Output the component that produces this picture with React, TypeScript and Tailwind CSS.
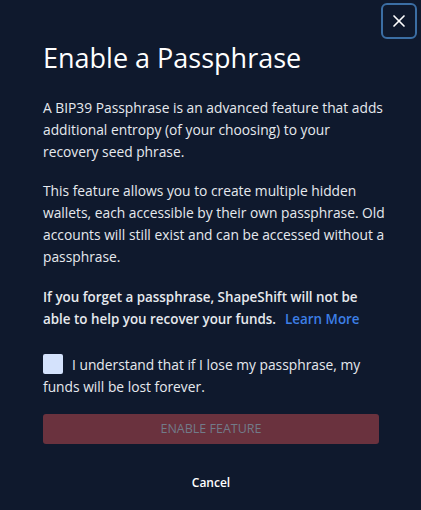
import { X } from "lucide-react";

export default function App() {
  return (
    <div
      className="relative min-h-[510px] w-full bg-[#0f192d] text-[#e6e9ee]"
      style={{ fontFamily: '"Open Sans", sans-serif' }}
    >
      <button className="absolute right-[4px] top-[3px] flex h-[36px] w-[36px] items-center justify-center rounded-md border-2 border-[#3b6ea4] text-white">
        <X className="h-[20px] w-[20px]" strokeWidth={2} />
      </button>
      <div className="pl-[43px] pr-[32px] pt-[38px]">
        <h1 className="text-[27px] leading-[40px] text-white">Enable a Passphrase</h1>
        <div className="mt-[19px] text-[13.8px] leading-[22px]">
          <p>
            A BIP39 Passphrase is an advanced feature that adds additional entropy (of your
            choosing) to your
            <br />
            recovery seed phrase.
          </p>
          <p className="mt-[17px]">
            This feature allows you to create multiple hidden wallets, each accessible by their own
            passphrase. Old accounts will still exist and can be accessed without a passphrase.
          </p>
          <p className="mt-[18px] pr-[10px] text-[13.4px] font-semibold">
            If you forget a passphrase, ShapeShift will not be able to help you recover your funds.
            <a className="ml-[9px] text-[#3d7fe6]">Learn More</a>
          </p>
          <label className="mt-[20px] block pr-[10px]">
            <span className="mr-[9px] inline-block h-[20px] w-[20px] translate-y-[4px] rounded-[2px] bg-[#d4e2fc] align-baseline" />
            I understand that if I lose my passphrase, my funds will be lost forever.
          </label>
        </div>
        <button className="mt-[16px] flex h-[30px] w-[336px] items-center justify-center rounded-[3px] bg-[#6a323e] text-[12.5px] uppercase text-[#727b89]">
          Enable Feature
        </button>
        <div className="mt-[30px] w-[336px] text-center text-[12px] font-semibold text-white">Cancel</div>
      </div>
    </div>
  );
}
